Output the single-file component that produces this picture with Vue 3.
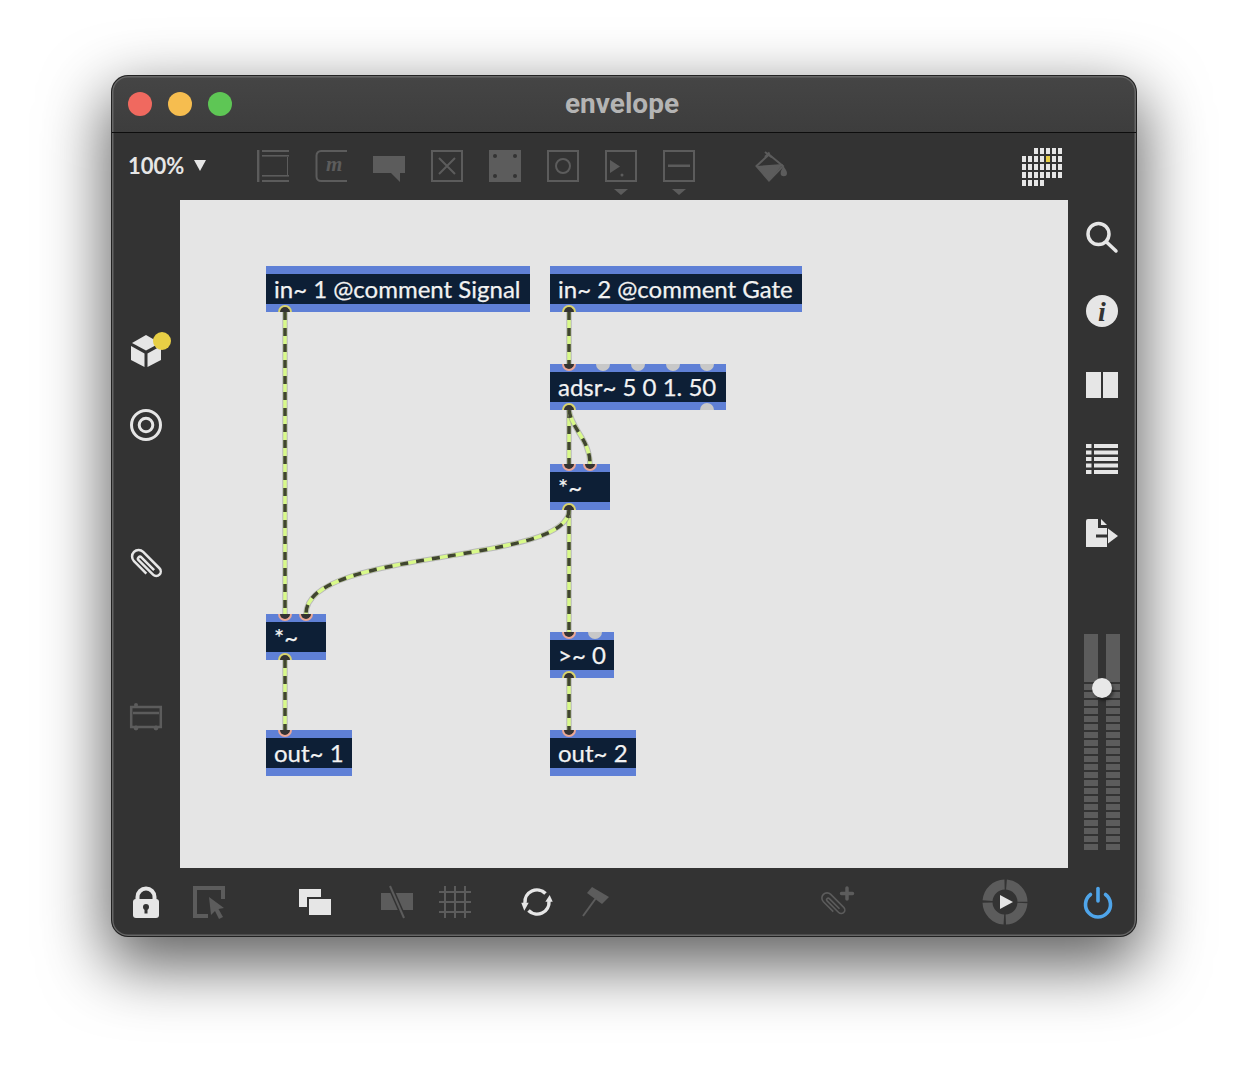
<template>
  <div class="page">
    <div class="window">
      <header class="titlebar">
        <div class="lights">
          <span class="light red"></span>
          <span class="light amber"></span>
          <span class="light green"></span>
        </div>
        <div class="title">envelope</div>
      </header>

      <div class="toolbar">
        <div class="zoom">100%<span class="zoom-arrow"></span></div>
        <div class="tools">
          <svg class="icon dim" viewBox="0 0 32 32">
            <rect x="0" y="0" width="2.400" height="32" />
            <rect x="5" y="0" width="27" height="2" />
            <rect x="5" y="5" width="27" height="1.600" />
            <rect x="30" y="7" width="1" height="18" />
            <rect x="5" y="25" width="27" height="1.600" />
            <rect x="5" y="30" width="27" height="2" />
          </svg>
          <svg class="icon dim" viewBox="0 0 32 32">
            <path class="line" d="M32 1H6a4.500 4.500 0 0 0-4.500 4.500V26.500A4.500 4.500 0 0 0 6 31H32" />
            <text x="11" y="21" class="m-glyph">m</text>
          </svg>
          <svg class="icon dim" viewBox="0 0 32 32">
            <path d="M0 6H32V23H27V32L18 23H0Z" />
          </svg>
          <svg class="icon dim" viewBox="0 0 32 32">
            <rect class="line" x="1" y="1" width="30" height="30" />
            <path class="line" d="M8 8L24 24M24 8L8 24" />
          </svg>
          <svg class="icon dim" viewBox="0 0 32 32">
            <rect width="32" height="32" />
            <g class="cut">
              <circle cx="6" cy="6" r="2" />
              <circle cx="26" cy="6" r="2" />
              <circle cx="6" cy="26" r="2" />
              <circle cx="26" cy="26" r="2" />
            </g>
          </svg>
          <svg class="icon dim" viewBox="0 0 32 32">
            <rect class="line" x="1" y="1" width="30" height="30" />
            <circle class="line" cx="16" cy="16" r="7" />
          </svg>
          <svg class="icon dim" viewBox="0 0 32 32">
            <rect class="line" x="1" y="1" width="30" height="30" />
            <path d="M5 10L15 16.500L5 23Z" />
            <circle cx="17" cy="25" r="1.500" />
            <path d="M9 39H23L16 45Z" />
          </svg>
          <svg class="icon dim" viewBox="0 0 32 32">
            <rect class="line" x="1" y="1" width="30" height="30" />
            <rect x="5" y="14.500" width="22" height="2.500" />
            <path d="M9 39H23L16 45Z" />
          </svg>
          <svg class="icon dim bucket" viewBox="0 0 32 32">
            <path class="line" d="M1.500 16L14 4.500L28 16L14 30.500Z" />
            <path d="M1.500 16L28 14L14 31Z" />
            <path class="line" d="M10 2L17 7.500M14.500 2.500L10 7" />
            <path d="M28.500 16C29.500 18.500 32 20.500 32 23A3.200 3.200 0 0 1 25.600 23C25.600 20.500 27.500 18.500 28.500 16Z" />
          </svg>
        </div>
        <div class="dots">
          <span
            v-for="cell in dotCells"
            :key="cell.id"
            class="dot"
            :class="{ off: cell.off, on: cell.on }"
          ></span>
        </div>
      </div>

      <div class="middle">
        <aside class="side left">
          <svg class="icon light-ic cube" viewBox="0 0 32 32">
            <path d="M16 0L30 8L16 15.500L2 8Z" />
            <path d="M1 11L14.500 18.500V32L1 25Z" />
            <path d="M17.500 18.500L31 11V25L17.500 32Z" />
            <circle class="badge" cx="32" cy="6" r="9" />
          </svg>
          <svg class="icon light-ic target" viewBox="0 0 32 32">
            <circle class="line" cx="16" cy="16" r="14.500" />
            <circle class="line" cx="16" cy="16" r="6.800" />
          </svg>
          <svg class="icon light-ic clip" viewBox="0 0 32 32">
            <path class="line" transform="translate(16 16) rotate(45)" d="M7 6.500H-10.500a6.500 6.500 0 0 1 0-13H12.500a4.500 4.500 0 0 1 0 9H-8a2 2 0 0 1 0-4H10" />
          </svg>
          <svg class="icon dim present" viewBox="0 0 32 32">
            <rect class="line" x="1.200" y="7" width="29.600" height="20" />
            <path class="line" d="M3 13H29" />
            <circle cx="6" cy="5" r="2" />
            <circle cx="6" cy="28" r="2.400" />
            <circle cx="26" cy="28" r="2.400" />
          </svg>
        </aside>

        <main class="canvas">
          <svg class="cords" width="888" height="668" viewBox="0 0 888 668">
            <g v-for="(d, i) in cords" :key="i">
              <path class="cord-halo" :d="d" />
              <path class="cord-base" :d="d" />
              <path class="cord-dash" :d="d" />
            </g>
          </svg>
          <div
            v-for="box in boxes"
            :key="box.text + box.x"
            class="box"
            :style="{ left: box.x + 'px', top: box.y + 'px', width: box.w + 'px' }"
          >
            <span class="box-text">{{ box.text }}</span>
            <i
              v-for="p in box.ins"
              :key="'i' + p"
              class="port in"
              :style="{ left: p + 'px' }"
            ></i>
            <i
              v-for="p in box.grayIns || []"
              :key="'g' + p"
              class="port gray-in"
              :style="{ left: p + 'px' }"
            ></i>
            <i
              v-for="p in box.outs"
              :key="'o' + p"
              class="port out"
              :style="{ left: p + 'px' }"
            ></i>
            <i
              v-for="p in box.grayOuts || []"
              :key="'h' + p"
              class="port gray-out"
              :style="{ left: p + 'px' }"
            ></i>
          </div>
        </main>

        <aside class="side right">
          <svg class="icon light-ic search" viewBox="0 0 32 32">
            <circle class="line thick" cx="12.500" cy="13" r="10.500" />
            <path class="line thick" d="M20.500 21L30 30" />
          </svg>
          <svg class="icon light-ic info" viewBox="0 0 32 32">
            <circle cx="16" cy="16" r="16" />
            <text x="16" y="26" class="i-glyph">i</text>
          </svg>
          <svg class="icon light-ic book" viewBox="0 0 32 32">
            <rect x="0" y="3" width="15" height="26" />
            <rect x="17" y="3" width="15" height="26" />
          </svg>
          <svg class="icon light-ic list" viewBox="0 0 32 32">
            <g v-for="y in [1, 7.5, 14, 20.5, 27]" :key="y">
              <rect x="0" :y="y" width="5.500" height="4" />
              <rect x="8" :y="y" width="24" height="4" />
            </g>
          </svg>
          <svg class="icon light-ic export" viewBox="0 0 32 32">
            <path d="M0 4A2 2 0 0 1 2 2H12V11H21V30H0Z" />
            <path d="M15 2L21 8H15Z" />
            <rect class="cut" x="10" y="17.500" width="11" height="3" />
            <path d="M22 11.500L32 19L22 26.500Z" />
          </svg>

          <div class="meter">
            <div v-for="c in 2" :key="c" class="meter-col">
              <div class="meter-top"></div>
              <div v-for="n in 21" :key="n" class="meter-seg"></div>
            </div>
            <div class="meter-thumb"></div>
          </div>
        </aside>
      </div>

      <footer class="bottombar">
        <svg class="icon light-ic lock" viewBox="0 0 32 32">
          <path class="line shackle" d="M7.500 15V11A8.500 8.500 0 0 1 24.500 11V15" />
          <rect x="3" y="13" width="26" height="19" rx="3" />
          <g class="cut">
            <circle cx="16" cy="21" r="3" />
            <rect x="14.500" y="21" width="3" height="6.500" />
          </g>
        </svg>
        <svg class="icon dim edit" viewBox="0 0 32 32">
          <path class="line shackle" d="M30 13V2H2V30H15" />
          <path d="M16 11L31 22L25.500 23L30 31L26 33L22 25L18 29Z" />
        </svg>
        <svg class="icon light-ic layers" viewBox="0 0 32 32">
          <rect x="0" y="3" width="22" height="18" />
          <rect class="cut" x="8" y="11" width="24" height="20" />
          <rect x="10" y="13" width="22" height="16" />
        </svg>
        <svg class="icon dim snap" viewBox="0 0 32 32">
          <rect x="0" y="7" width="32" height="17" />
          <path class="slash-cut" d="M9 0L23 32" />
          <path class="line" d="M9 0L23 32" />
        </svg>
        <svg class="icon dim grid-ic" viewBox="0 0 32 32">
          <path class="line" d="M6 0V32M16 0V32M26 0V32M0 6H32M0 16H32M0 26H32" />
        </svg>
        <svg class="icon light-ic sync" viewBox="0 0 32 32">
          <path class="line ring-arc" d="M4 17A12 12 0 0 1 24.500 7.500" />
          <path class="line ring-arc" d="M28 15A12 12 0 0 1 7.500 24.500" />
          <path d="M28.700 9L31.700 15.700H24.300Z" />
          <path d="M3.300 24.700L0.300 16.700H7.700Z" />
        </svg>
        <svg class="icon dim hammer" viewBox="0 0 32 32">
          <path d="M13 1L30 11L23 18L8 7Z" />
          <path class="line" d="M17 12L4 30" />
        </svg>
        <svg class="icon dim clip-plus" viewBox="0 0 32 32">
          <path class="line" transform="translate(12 18) rotate(45) scale(.8)" d="M7 6.500H-10.500a6.500 6.500 0 0 1 0-13H12.500a4.500 4.500 0 0 1 0 9H-8a2 2 0 0 1 0-4H10" />
          <path class="line thick" d="M26 2V13M20.500 7.500H31.500" />
        </svg>
        <svg class="icon play" viewBox="0 0 46 46">
          <circle class="ring" cx="23" cy="23" r="17.500" />
          <path class="tri" d="M18 16L31 23L18 30Z" />
        </svg>
        <svg class="icon power" viewBox="0 0 32 32">
          <path d="M8.500 8.500A12.500 12.500 0 1 0 23.500 8.500" />
          <path d="M16 2.500V15" />
        </svg>
      </footer>
    </div>
  </div>
</template>

<script setup>
const boxes = [
  { x: 86, y: 66, w: 264, text: "in~ 1 @comment Signal", ins: [], outs: [19] },
  { x: 370, y: 66, w: 252, text: "in~ 2 @comment Gate", ins: [], outs: [19] },
  { x: 370, y: 164, w: 176, text: "adsr~ 5 0 1. 50", ins: [19], grayIns: [53, 88, 123, 157], outs: [19], grayOuts: [157] },
  { x: 370, y: 264, w: 60, text: "*~", ins: [19, 40], outs: [19] },
  { x: 86, y: 414, w: 60, text: "*~", ins: [19, 40], outs: [19] },
  { x: 370, y: 432, w: 64, text: ">~ 0", ins: [19], grayIns: [45], outs: [19] },
  { x: 86, y: 530, w: 86, text: "out~ 1", ins: [19], outs: [] },
  { x: 370, y: 530, w: 86, text: "out~ 2", ins: [19], outs: [] },
];

const cords = [
  "M105 112V414",
  "M389 112V164",
  "M389 210V264",
  "M389 210C392 230 410 240 410 264",
  "M389 310V432",
  "M389 310C389 365 126 348 126 414",
  "M105 460V530",
  "M389 478V530",
];

// 7 columns by 5 rows, first row starts two cells in and last row stops after four
const dotCells = [];
for (let row = 0; row < 5; row++) {
  for (let col = 0; col < 7; col++) {
    dotCells.push({
      id: `${row}-${col}`,
      off: (row === 0 && col < 2) || (row === 4 && col > 3),
      on: row === 1 && col === 4,
    });
  }
}
</script>

<style>
html,
body {
  margin: 0;
  background: #fff;
}
</style>

<style scoped>
.page {
  width: 1248px;
  height: 1084px;
  box-sizing: border-box;
  padding: 76px 112px 148px;
  overflow: hidden;
  font-family: "Lato", "Liberation Sans", sans-serif;
}

.window {
  display: flex;
  flex-direction: column;
  width: 1024px;
  height: 860px;
  border-radius: 16px;
  background: linear-gradient(#454545, #3d3d3d) 0 0 / 100% 56px no-repeat, #333;
  box-shadow:
    inset 0 0 0 1.5px #666,
    0 0 0 1px #222,
    0 24px 64px 6px rgba(0, 0, 0, 0.62);
}

.titlebar {
  position: relative;
  display: flex;
  flex: none;
  align-items: center;
  justify-content: center;
  height: 56px;
  border-bottom: 1px solid #0d0d0d;
}

.lights {
  position: absolute;
  left: 16px;
  top: 16px;
  display: flex;
  gap: 16px;
}

.light {
  width: 24px;
  height: 24px;
  border-radius: 50%;
}

.red { background: #f0695f; }
.amber { background: #f6bd4f; }
.green { background: #5ec655; }

.title {
  margin: -2px 4px 0 0;
  color: #b4b4b4;
  font-family: "Roboto", "Liberation Sans", sans-serif;
  font-size: 28px;
  font-weight: 700;
}

.toolbar {
  display: flex;
  flex: none;
  align-items: flex-start;
  box-sizing: border-box;
  height: 67px;
  padding: 17px 16px 0;
}

.zoom {
  display: flex;
  align-items: center;
  width: 129px;
  height: 32px;
  margin-top: -1px;
  color: #e6e6e6;
  font-size: 22px;
  font-weight: 700;
}

.zoom-arrow {
  width: 0;
  height: 0;
  margin: 1px 0 0 10px;
  border-left: 6px solid transparent;
  border-right: 6px solid transparent;
  border-top: 11px solid #e6e6e6;
}

.tools {
  display: flex;
  gap: 26px;
}

.icon {
  display: block;
  flex: none;
  width: 32px;
  height: 32px;
  overflow: visible;
}

.dim {
  fill: #5c5c5c;
  stroke: none;
}

.light-ic {
  fill: #e6e6e6;
  stroke: none;
}

.line {
  fill: none;
  stroke-width: 2;
}

.dim .line { stroke: #5c5c5c; }
.light-ic .line { stroke: #e6e6e6; }
.line.thick { stroke-width: 3.5; stroke-linecap: round; }
.line.shackle { stroke-width: 4; }
.line.ring-arc { stroke-width: 3.5; }
.cut { fill: #333; }

.slash-cut {
  fill: none;
  stroke: #333;
  stroke-width: 5;
}

.m-glyph {
  fill: #5c5c5c;
  font-family: "Liberation Serif", serif;
  font-size: 21px;
  font-style: italic;
  font-weight: 700;
}

.i-glyph {
  fill: #333;
  font-family: "Liberation Serif", serif;
  font-size: 28px;
  font-style: italic;
  font-weight: 700;
  text-anchor: middle;
}

.bucket { margin-left: 34px; }

.dots {
  display: grid;
  grid-template-columns: repeat(7, 4px);
  grid-auto-rows: 6px;
  gap: 2px;
  margin-top: -2px;
  margin-left: auto;
  margin-right: 58px;
}

.dot { background: #e6e6e6; }
.dot.off { background: transparent; }
.dot.on { background: #e8cf45; }

.middle {
  display: flex;
  flex: none;
  height: 668px;
}

.side {
  position: relative;
  display: flex;
  flex: none;
  flex-direction: column;
  align-items: center;
  width: 68px;
  box-sizing: border-box;
}

.canvas {
  position: relative;
  flex: none;
  width: 888px;
  height: 668px;
  background: #e5e5e5;
}

.cube { margin-top: 135px; }
.badge { fill: #e8cf45; }
.target { margin-top: 42px; }
.target .line { stroke-width: 3; }
.clip { margin-top: 107px; }
.clip .line { stroke-width: 2.5; }
.present { margin-top: 120px; }
.present .line { stroke-width: 2.5; }

.search { margin-top: 21px; }
.info { margin-top: 42px; }
.book { margin-top: 42px; }
.list { margin-top: 42px; }
.export { margin-top: 42px; }

.meter {
  position: relative;
  display: flex;
  gap: 8px;
  margin-top: 85px;
}

.meter-col {
  display: flex;
  flex-direction: column;
  gap: 2px;
  width: 14px;
}

.meter-top {
  height: 48px;
  background: #5c5c5c;
}

.meter-seg {
  height: 6px;
  background: #5c5c5c;
}

.meter-thumb {
  position: absolute;
  left: 8px;
  top: 44px;
  width: 20px;
  height: 20px;
  border-radius: 50%;
  background: #e8e8e8;
  box-shadow: 2px 3px 3px rgba(0, 0, 0, 0.4);
}

.cords {
  position: absolute;
  left: 0;
  top: 0;
  fill: none;
}

.cord-halo {
  stroke: rgba(130, 130, 130, 0.45);
  stroke-width: 5.5;
}

.cord-base {
  stroke: #d8f98a;
  stroke-width: 3.5;
}

.cord-dash {
  stroke: #404530;
  stroke-width: 3.5;
  stroke-dasharray: 8 8;
}

.box {
  position: absolute;
  box-sizing: border-box;
  height: 46px;
  border-top: 8px solid #5f80d6;
  border-bottom: 8px solid #5f80d6;
  padding-left: 8px;
  background: #0d1f36;
  color: #f2f2f2;
  font-size: 24px;
  line-height: 30px;
  white-space: nowrap;
  -webkit-text-stroke: 0.25px #f2f2f2;
}

.port {
  position: absolute;
  box-sizing: border-box;
  width: 14px;
  height: 7px;
  margin-left: -7px;
}

.port.in,
.port.gray-in {
  top: -8px;
  border-radius: 0 0 7px 7px;
}

.port.out,
.port.gray-out {
  bottom: -8px;
  border-radius: 7px 7px 0 0;
}

.port.in {
  border: 2px solid #eba795;
  border-top: 0;
  background: #333;
}

.port.out {
  border: 2px solid #d9d36c;
  border-bottom: 0;
  background: #333;
}

.port.gray-in,
.port.gray-out {
  background: #c8c8c8;
}

.bottombar {
  display: flex;
  flex: 1;
  align-items: center;
  padding: 0 0 1px 18px;
}

.edit { margin-left: 31px; }
.layers { margin-left: 74px; }
.snap { margin-left: 50px; }
.grid-ic { margin-left: 26px; }
.sync { margin-left: 50px; }
.hammer { margin-left: 26px; }
.clip-plus { margin-left: 210px; }

.play {
  width: 46px;
  height: 46px;
  margin-left: 129px;
}

.ring {
  fill: none;
  stroke: #5c5c5c;
  stroke-width: 10;
  stroke-dasharray: 25.49 2;
  stroke-dashoffset: -1;
}

.tri { fill: #e6e6e6; }

.power {
  margin-left: 54px;
  fill: none;
  stroke: #4fa5ea;
  stroke-width: 3.6;
  stroke-linecap: round;
}
</style>
